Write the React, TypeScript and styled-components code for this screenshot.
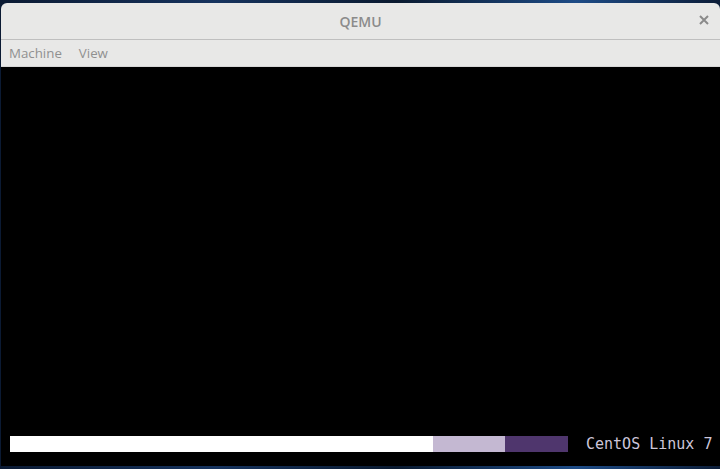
import React from "react";
import styled, { createGlobalStyle } from "styled-components";

const Global = createGlobalStyle`
  html, body { margin: 0; padding: 0; }
  body {
    width: 720px;
    height: 469px;
    overflow: hidden;
    background: linear-gradient(90deg, #0b1a33 0%, #16335e 30%, #0a1a30 55%, #1d4b86 80%, #0c1d38 100%);
  }
`;

const Window = styled.div`
  margin: 3px 0 0 1px;
  width: 719px;
  height: 463px;
  display: flex;
  flex-direction: column;
  border-radius: 6px 6px 0 0;
  overflow: hidden;
  background: #e8e8e7;
`;

const TitleBar = styled.div`
  height: 36px;
  flex: none;
  display: flex;
  align-items: center;
  justify-content: center;
  position: relative;
  border-bottom: 1px solid #bfbfbf;
  font-family: "Open Sans", "Noto Sans", sans-serif;
  font-size: 14px;
  font-weight: 600;
  color: #8b8b8b;
`;

const CloseButton = styled.div`
  position: absolute;
  right: 11px;
  top: 12px;
  width: 10px;
  height: 10px;
  display: flex;
`;

const MenuBar = styled.div`
  height: 26px;
  flex: none;
  display: flex;
  align-items: center;
  gap: 17px;
  padding: 0 0 0 8px;
  border-bottom: 1px solid #d6d6d6;
  font-family: "Open Sans", "Noto Sans", sans-serif;
  font-size: 13.3px;
  color: #909090;
`;

const MenuItem = styled.span`
  letter-spacing: 0;
`;

const Screen = styled.div`
  flex: 1;
  background: #000;
  display: flex;
  flex-direction: column;
  justify-content: flex-end;
  padding: 0 0 14px 9px;
`;

const BootRow = styled.div`
  display: flex;
  align-items: center;
  height: 16px;
`;

const Bar = styled.div`
  display: flex;
  width: 558px;
  height: 16px;
`;

const Segment = styled.div<{ $color: string; $w: number }>`
  width: ${(p) => p.$w}px;
  height: 100%;
  background: ${(p) => p.$color};
`;

const Label = styled.span`
  margin-left: 18px;
  font-family: "DejaVu Sans Mono", "Liberation Mono", monospace;
  font-size: 15px;
  line-height: 16px;
  color: #cdc6da;
  white-space: pre;
`;

export default function App() {
  return (
    <>
      <Global />
      <Window>
        <TitleBar>
          QEMU
          <CloseButton>
            <svg width="10" height="10" viewBox="0 0 10 10">
              <path d="M1 1 L9 9 M9 1 L1 9" stroke="#8a8a8a" strokeWidth="2" />
            </svg>
          </CloseButton>
        </TitleBar>
        <MenuBar>
          <MenuItem>Machine</MenuItem>
          <MenuItem>View</MenuItem>
        </MenuBar>
        <Screen>
          <BootRow>
            <Bar>
              <Segment $color="#ffffff" $w={423} />
              <Segment $color="#c4b8d2" $w={72} />
              <Segment $color="#4f366d" $w={63} />
            </Bar>
            <Label>CentOS Linux 7</Label>
          </BootRow>
        </Screen>
      </Window>
    </>
  );
}
